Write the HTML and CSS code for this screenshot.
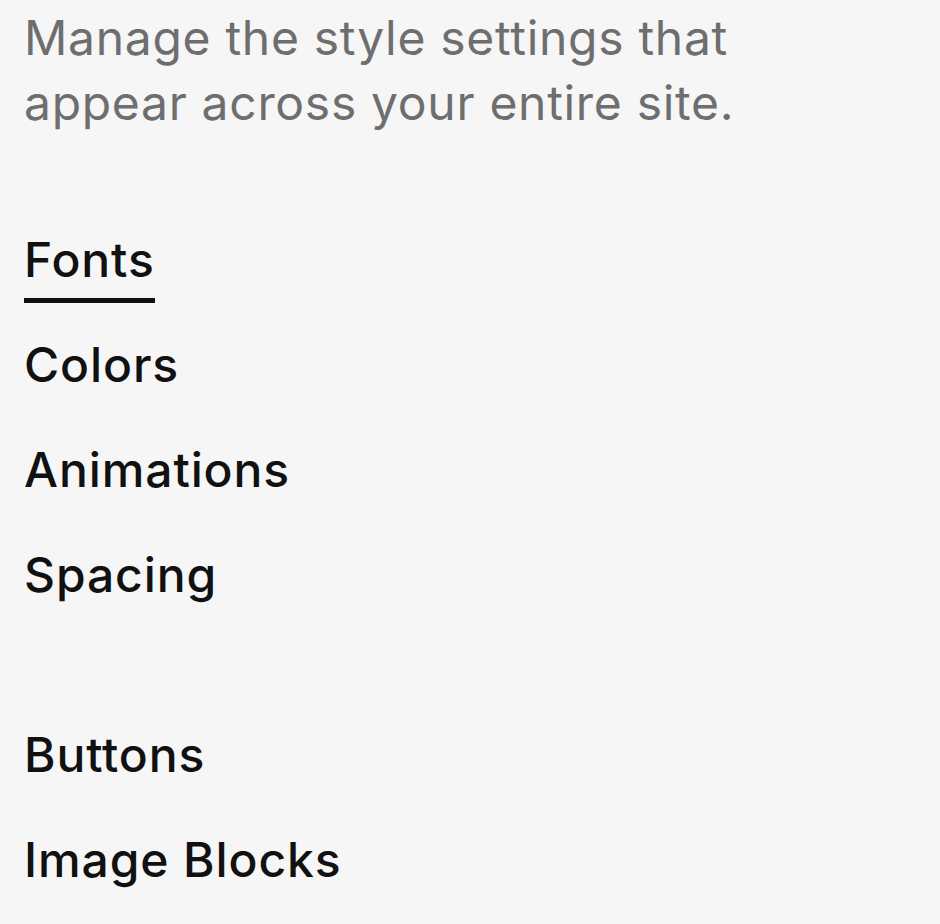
FILE: index.html
```html
<!DOCTYPE html>
<html lang="en">
<head>
<meta charset="utf-8">
<title>Site Styles</title>
<link rel="stylesheet" href="styles.css">
</head>
<body>
<div class="panel">
  <p class="intro">Manage the style settings that appear across your entire site.</p>
  <ul class="nav">
    <li class="nav-item"><a class="nav-link is-active" href="#">Fonts</a></li>
    <li class="nav-item"><a class="nav-link" href="#">Colors</a></li>
    <li class="nav-item"><a class="nav-link" href="#">Animations</a></li>
    <li class="nav-item"><a class="nav-link" href="#">Spacing</a></li>
  </ul>
  <ul class="nav nav-second">
    <li class="nav-item"><a class="nav-link" href="#">Buttons</a></li>
    <li class="nav-item"><a class="nav-link" href="#">Image Blocks</a></li>
  </ul>
</div>
</body>
</html>
```
FILE: styles.css
```css
html, body {
  margin: 0;
  padding: 0;
  background: #f6f6f6;
}
body {
  font-family: Inter, "Liberation Sans", Arial, sans-serif;
  -webkit-font-smoothing: antialiased;
}
.panel {
  padding: 5px 24px 0 24px;
  width: 760px;
}
.intro {
  margin: 0;
  font-size: 48px;
  line-height: 65px;
  letter-spacing: 0.7px;
  color: #6e6e6e;
}
.nav {
  list-style: none;
  margin: 96px 0 0 0;
  padding: 0;
}
.nav-second {
  margin-top: 108px;
}
.nav-item {
  margin: 0 0 33px 0;
  height: 72px;
}
.nav-link {
  display: inline-block;
  font-size: 48px;
  line-height: 58px;
  font-weight: 500;
  letter-spacing: 0.9px;
  color: #111111;
  text-decoration: none;
  padding-bottom: 9px;
  border-bottom: 5px solid transparent;
}
.nav-link.is-active {
  border-bottom-color: #111111;
}
```
